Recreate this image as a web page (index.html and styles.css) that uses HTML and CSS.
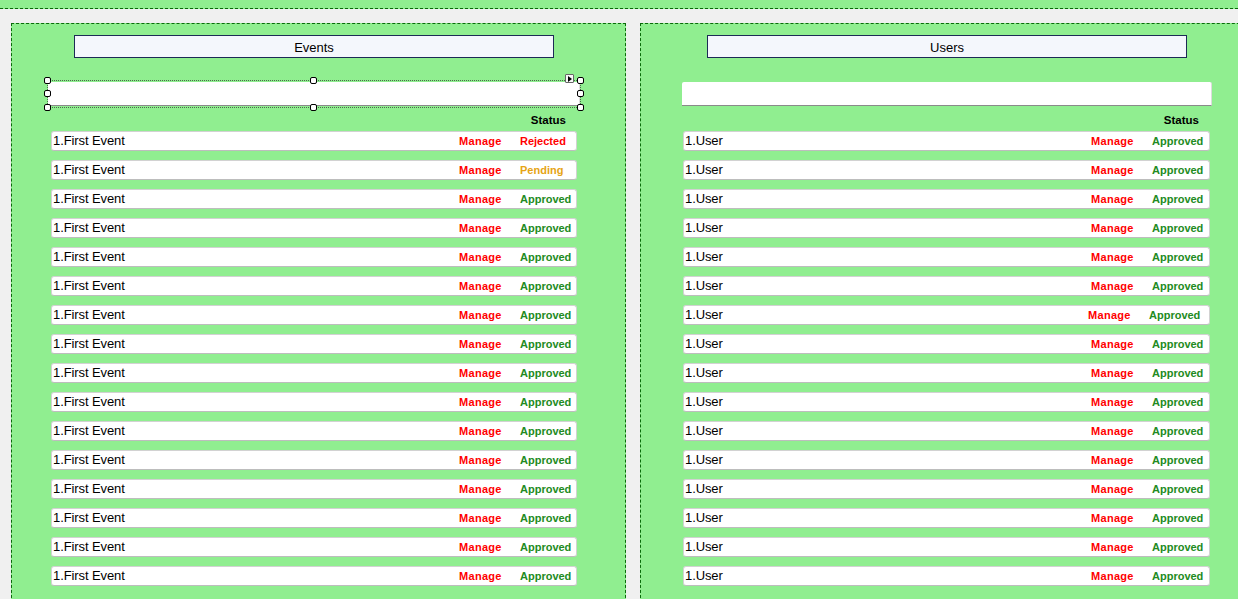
FILE: index.html
```html
<!DOCTYPE html>
<html>
<head>
<meta charset="utf-8">
<link rel="stylesheet" href="styles.css">
</head>
<body>
<div class="topband"></div>
<div class="panels">
  <section class="panel panel--events">
    <div class="title">Events</div>
    <div class="selection">
      <div class="textbox"></div>
      <span class="handle h-tl"></span><span class="handle h-tc"></span><span class="handle h-tr"></span>
      <span class="handle h-ml"></span><span class="handle h-mr"></span>
      <span class="handle h-bl"></span><span class="handle h-bc"></span><span class="handle h-br"></span>
      <span class="smarttag"><span class="tri"></span></span>
    </div>
    <div class="status-head">Status</div>
    <div class="list">
      <div class="row"><span class="name">1.First Event</span><span class="manage">Manage</span><span class="st rejected">Rejected</span></div>
      <div class="row"><span class="name">1.First Event</span><span class="manage">Manage</span><span class="st pending">Pending</span></div>
      <div class="row"><span class="name">1.First Event</span><span class="manage">Manage</span><span class="st approved">Approved</span></div>
      <div class="row"><span class="name">1.First Event</span><span class="manage">Manage</span><span class="st approved">Approved</span></div>
      <div class="row"><span class="name">1.First Event</span><span class="manage">Manage</span><span class="st approved">Approved</span></div>
      <div class="row"><span class="name">1.First Event</span><span class="manage">Manage</span><span class="st approved">Approved</span></div>
      <div class="row"><span class="name">1.First Event</span><span class="manage">Manage</span><span class="st approved">Approved</span></div>
      <div class="row"><span class="name">1.First Event</span><span class="manage">Manage</span><span class="st approved">Approved</span></div>
      <div class="row"><span class="name">1.First Event</span><span class="manage">Manage</span><span class="st approved">Approved</span></div>
      <div class="row"><span class="name">1.First Event</span><span class="manage">Manage</span><span class="st approved">Approved</span></div>
      <div class="row"><span class="name">1.First Event</span><span class="manage">Manage</span><span class="st approved">Approved</span></div>
      <div class="row"><span class="name">1.First Event</span><span class="manage">Manage</span><span class="st approved">Approved</span></div>
      <div class="row"><span class="name">1.First Event</span><span class="manage">Manage</span><span class="st approved">Approved</span></div>
      <div class="row"><span class="name">1.First Event</span><span class="manage">Manage</span><span class="st approved">Approved</span></div>
      <div class="row"><span class="name">1.First Event</span><span class="manage">Manage</span><span class="st approved">Approved</span></div>
      <div class="row"><span class="name">1.First Event</span><span class="manage">Manage</span><span class="st approved">Approved</span></div>
    </div>
  </section>
  <section class="panel panel--users">
    <div class="title">Users</div>
    <div class="textbox textbox--plain"></div>
    <div class="status-head">Status</div>
    <div class="list">
      <div class="row"><span class="name">1.User</span><span class="manage">Manage</span><span class="st approved">Approved</span></div>
      <div class="row"><span class="name">1.User</span><span class="manage">Manage</span><span class="st approved">Approved</span></div>
      <div class="row"><span class="name">1.User</span><span class="manage">Manage</span><span class="st approved">Approved</span></div>
      <div class="row"><span class="name">1.User</span><span class="manage">Manage</span><span class="st approved">Approved</span></div>
      <div class="row"><span class="name">1.User</span><span class="manage">Manage</span><span class="st approved">Approved</span></div>
      <div class="row"><span class="name">1.User</span><span class="manage">Manage</span><span class="st approved">Approved</span></div>
      <div class="row row--shift"><span class="name">1.User</span><span class="manage">Manage</span><span class="st approved">Approved</span></div>
      <div class="row"><span class="name">1.User</span><span class="manage">Manage</span><span class="st approved">Approved</span></div>
      <div class="row"><span class="name">1.User</span><span class="manage">Manage</span><span class="st approved">Approved</span></div>
      <div class="row"><span class="name">1.User</span><span class="manage">Manage</span><span class="st approved">Approved</span></div>
      <div class="row"><span class="name">1.User</span><span class="manage">Manage</span><span class="st approved">Approved</span></div>
      <div class="row"><span class="name">1.User</span><span class="manage">Manage</span><span class="st approved">Approved</span></div>
      <div class="row"><span class="name">1.User</span><span class="manage">Manage</span><span class="st approved">Approved</span></div>
      <div class="row"><span class="name">1.User</span><span class="manage">Manage</span><span class="st approved">Approved</span></div>
      <div class="row"><span class="name">1.User</span><span class="manage">Manage</span><span class="st approved">Approved</span></div>
      <div class="row"><span class="name">1.User</span><span class="manage">Manage</span><span class="st approved">Approved</span></div>
    </div>
  </section>
</div>
</body>
</html>
```

FILE: styles.css
```css
html, body {
  margin: 0;
  padding: 0;
  overflow: hidden;
}
body {
  background: #f0f0f0;
  font-family: "Liberation Sans", Arial, sans-serif;
  color: #000;
  width: 1238px;
  height: 599px;
}
.topband {
  height: 8px;
  background: #90ee90;
  border-bottom: 1px dashed #0a6a0a;
}
.panels {
  display: flex;
  gap: 14px;
  margin: 14px 0 0 11px;
  height: 576px;
  overflow: hidden;
}
.panel {
  flex: none;
  box-sizing: border-box;
  width: 615px;
  height: 580px;
  background: #90ee90;
  border: 1px dashed #0a6a0a;
  padding-top: 11px;
  display: flex;
  flex-direction: column;
  align-items: flex-start;
}
.panel--users {
  width: 640px;
}
.title {
  box-sizing: border-box;
  width: 480px;
  height: 23px;
  border: 1px solid #1c2b55;
  background: #f4f7fc;
  font-size: 13px;
  line-height: 21px;
  padding-top: 1px;
  text-align: center;
}
.panel--events .title { margin-left: 62px; }
.panel--users .title { margin-left: 66px; }

.selection {
  position: relative;
  box-sizing: border-box;
  width: 534px;
  height: 28px;
  margin: 22px 0 0 35px;
  border: 1px dotted #4b6b4b;
  padding: 1px 0 0 0;
}
.textbox {
  box-sizing: border-box;
  width: 100%;
  height: 24px;
  background: #fff;
  border-bottom: 1px solid #8a8a8a;
  border-right: 1px solid #dcdcdc;
  border-radius: 2px 2px 0 0;
}
.textbox--plain {
  width: 530px;
  margin: 24px 0 0 41px;
}
.handle {
  position: absolute;
  box-sizing: border-box;
  width: 7px;
  height: 7px;
  background: #fff;
  border: 1px solid #000;
  border-radius: 2px;
}
.h-tl { left: -4px; top: -4px; }
.h-tc { left: 262px; top: -4px; }
.h-tr { right: -4px; top: -4px; }
.h-ml { left: -4px; top: 9px; }
.h-mr { right: -4px; top: 9px; }
.h-bl { left: -4px; bottom: -4px; }
.h-bc { left: 262px; bottom: -4px; }
.h-br { right: -4px; bottom: -4px; }
.smarttag {
  position: absolute;
  box-sizing: border-box;
  left: 517px;
  top: -7px;
  width: 9px;
  height: 9px;
  background: #f8f8f8;
  border: 1px solid #666;
  border-radius: 1px;
}
.tri {
  position: absolute;
  left: 2px;
  top: 1px;
  width: 0;
  height: 0;
  border-top: 3px solid transparent;
  border-bottom: 3px solid transparent;
  border-left: 4px solid #000;
}
.status-head {
  align-self: stretch;
  font-size: 11.5px;
  font-weight: bold;
  line-height: 14px;
  text-align: right;
}
.panel--events .status-head { margin: 5px 59px 4px 0; }
.panel--users .status-head { margin: 7px 80px 4px 0; }

.list {
  display: flex;
  flex-direction: column;
  gap: 9px;
}
.panel--events .list { margin-left: 39px; width: 526px; }
.panel--users .list { margin-left: 42px; width: 527px; }

.row {
  box-sizing: border-box;
  height: 20px;
  background: #fff;
  border: 1px solid #d2d2d2;
  border-bottom-color: #bdbdbd;
  border-radius: 3px;
  display: grid;
  grid-template-columns: 1fr 61px 56px;
  align-items: center;
  padding-left: 1px;
}
.panel--users .row { grid-template-columns: 1fr 61px 57px; }
.panel--users .row--shift { padding-right: 3px; }
.name {
  font-size: 13px;
  line-height: 18px;
  letter-spacing: -0.1px;
  white-space: nowrap;
}
.manage, .st {
  font-size: 11px;
  font-weight: bold;
  line-height: 18px;
  white-space: nowrap;
}
.manage { color: #ff0000; letter-spacing: 0.3px; }
.rejected { color: #ff0000; }
.pending { color: #e6a414; }
.approved { color: #228b22; }
```
